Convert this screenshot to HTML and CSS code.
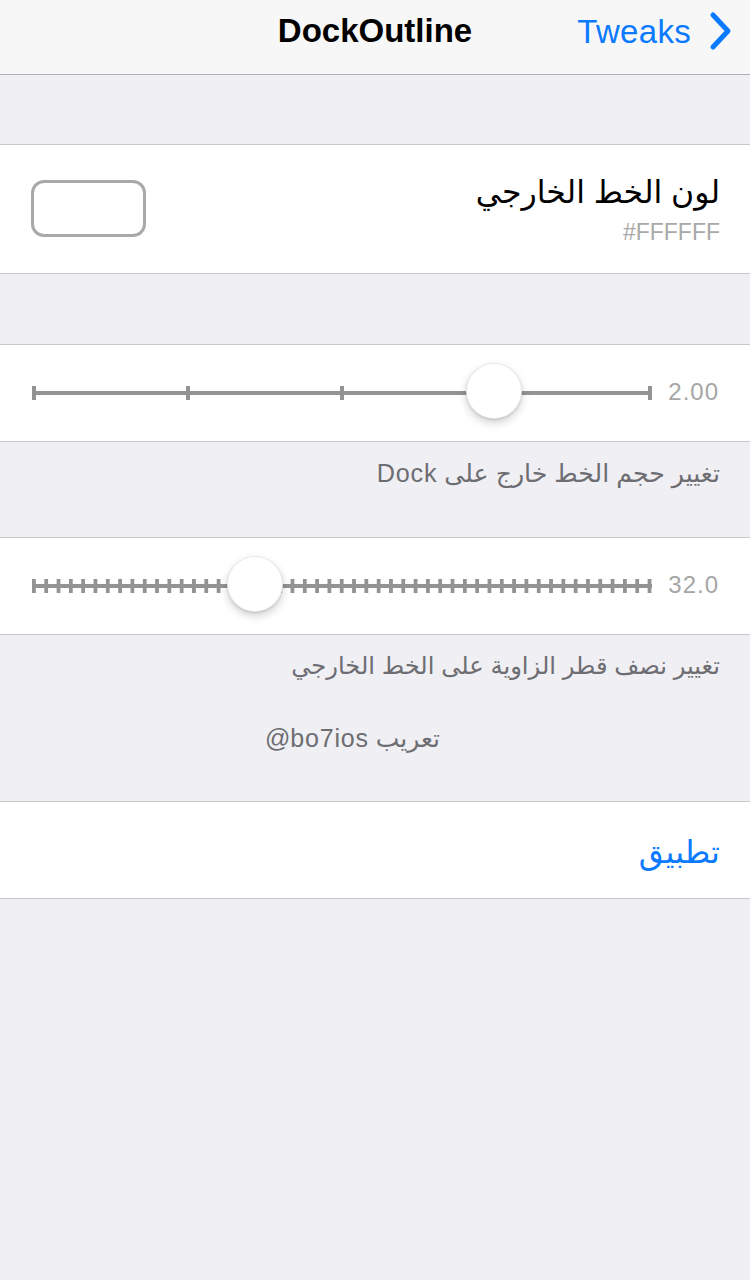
FILE: index.html
```html
<!DOCTYPE html>
<html lang="ar">
<head>
<meta charset="utf-8">
<title>DockOutline</title>
<link rel="stylesheet" href="styles.css">
</head>
<body>
<header class="nav">
  <div class="nav-title">DockOutline</div>
  <a class="nav-forward">
    <span class="nav-forward-label">Tweaks</span>
    <svg class="chevron" width="26" height="40" viewBox="0 0 26 40"><path d="M5 4 L20 20 L5 36" fill="none" stroke="#0a7aff" stroke-width="5" stroke-linecap="round" stroke-linejoin="round"/></svg>
  </a>
</header>

<section class="group group-first">
  <div class="row color-row">
    <div class="swatch"></div>
    <div class="color-text">
      <div class="color-title" dir="rtl">لون الخط الخارجي</div>
      <div class="color-hex">#FFFFFF</div>
    </div>
  </div>
</section>

<section class="group">
  <div class="row slider-row">
    <div class="slider">
      <div class="track track-few"></div>
      <div class="thumb" style="left: 462px"></div>
    </div>
    <div class="slider-value">2.00</div>
  </div>
</section>
<div class="footer footer-wide" dir="rtl">تغيير حجم الخط خارج على <span class="latin">Dock</span></div>

<section class="group group-tight">
  <div class="row slider-row">
    <div class="slider">
      <div class="track track-many"></div>
      <div class="thumb" style="left: 223px"></div>
    </div>
    <div class="slider-value">32.0</div>
  </div>
</section>
<div class="footer" dir="rtl">تغيير نصف قطر الزاوية على الخط الخارجي</div>
<div class="credit" dir="rtl">تعريب <bdi dir="ltr" class="latin">@bo7ios</bdi></div>

<section class="group group-apply">
  <div class="row apply-row">
    <span class="apply" dir="rtl">تطبيق</span>
  </div>
</section>
</body>
</html>
```

FILE: styles.css
```css
* { box-sizing: border-box; }
html, body {
  margin: 0;
  padding: 0;
  background: #efeff4;
  font-family: "Liberation Sans", "DejaVu Sans", sans-serif;
}
body { width: 750px; height: 1280px; overflow: hidden; }

.nav {
  height: 75px;
  background: #f7f7f8;
  border-bottom: 1px solid #b1b1b3;
  display: flex;
  align-items: center;
  justify-content: center;
  position: relative;
}
.nav-title {
  font-size: 33px;
  font-weight: bold;
  color: #000;
  margin-top: -12px;
}
.nav-forward {
  position: absolute;
  right: 16px;
  top: 10px;
  display: flex;
  align-items: center;
  color: #0a7aff;
}
.nav-forward-label {
  font-size: 33px;
  margin-right: 17px;
  margin-top: 3px;
  letter-spacing: 0.3px;
}
.chevron { display: block; }

.group {
  background: #fff;
  border-top: 1px solid #c8c7cc;
  border-bottom: 1px solid #c8c7cc;
  margin-top: 70px;
}
.group-first { margin-top: 69px; }
.group-tight { margin-top: 47px; }
.group-apply { margin-top: 46px; }

.row { display: flex; align-items: center; }

.color-row {
  height: 128px;
  padding: 0 30px 0 31px;
  justify-content: space-between;
}
.swatch {
  width: 115px;
  height: 57px;
  border: 3px solid #a9a9a9;
  border-radius: 13px;
  margin-top: -1px;
}
.color-text { text-align: right; }
.color-title {
  font-size: 31.5px;
  line-height: 40px;
  color: #000;
  margin-top: 2px;
}
.color-hex {
  font-size: 23px;
  line-height: 32px;
  color: #a9a9a9;
  margin-top: 4px;
}

.slider-row {
  height: 96px;
  padding: 0 31px 0 32px;
  gap: 15px;
}
.slider {
  flex: 1;
  position: relative;
  height: 56px;
  display: flex;
  align-items: center;
}
.track {
  width: 100%;
  height: 14px;
  background-image:
    linear-gradient(#939393, #939393),
    linear-gradient(to right, #939393 0 4px, transparent 4px);
  background-repeat: no-repeat, repeat-x;
  background-position: 0 5px, 0 0;
}
.track-few { background-size: 100% 4px, 154px 14px; }
.track-many { background-size: 100% 4px, 12.32px 14px; }

.thumb {
  position: absolute;
  top: -2px;
  width: 56px;
  height: 56px;
  margin-left: -28px;
  border-radius: 50%;
  background: #fff;
  border: 0.5px solid rgba(0,0,0,0.08);
  box-shadow: 0 4px 9px rgba(0,0,0,0.18), 0 1px 2px rgba(0,0,0,0.12);
}
.slider-value {
  width: 52px;
  text-align: right;
  font-size: 24px;
  letter-spacing: 1px;
  color: #a6a6a6;
  margin-top: -2px;
}

.footer {
  padding: 14px 30px 0 30px;
  font-size: 24.2px;
  line-height: 34px;
  color: #6d6d72;
  text-align: right;
}
.footer-wide { font-size: 25.2px; }
.latin { letter-spacing: 0.8px; }
.credit {
  padding: 38px 45px 0 0;
  font-size: 25px;
  line-height: 34px;
  color: #6d6d72;
  text-align: center;
}

.apply-row {
  height: 96px;
  padding: 0 30px;
  justify-content: flex-end;
}
.apply {
  font-size: 32px;
  color: #0a7aff;
  margin-top: 4px;
}
```
